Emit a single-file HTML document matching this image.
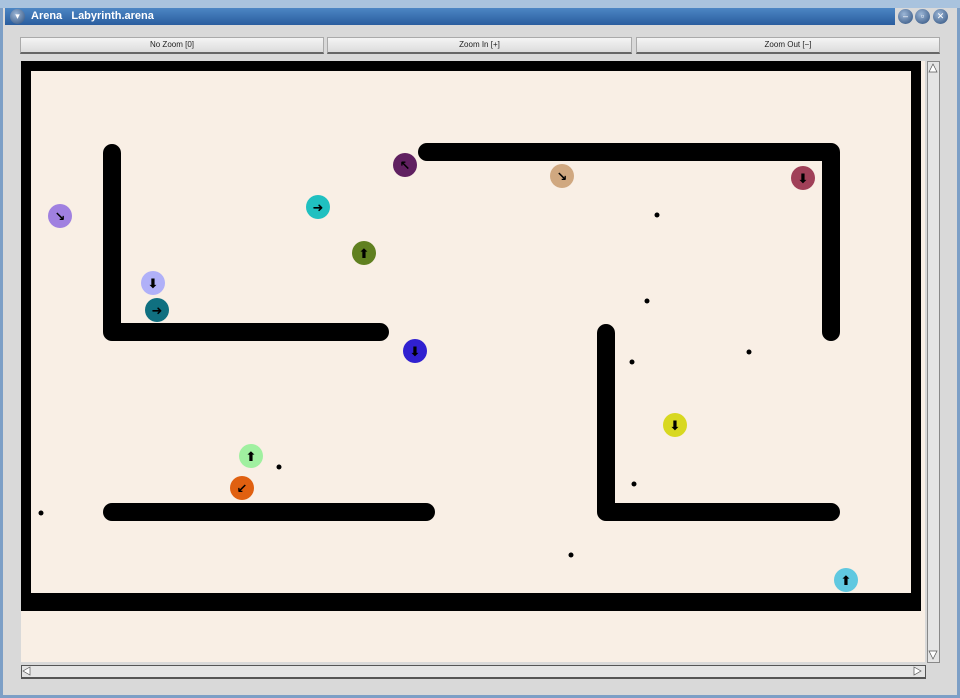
<!DOCTYPE html>
<html><head><style>
body{margin:0;width:960px;height:698px;overflow:hidden;background:#d4d4d4;font-family:"Liberation Sans",sans-serif;position:relative}
.frame{position:absolute;left:0;top:0;width:954px;height:692px;border:3px solid #7d9fc6;background:#d9d9d9}
.title{position:absolute;left:5px;top:8px;width:890px;height:17px;background:linear-gradient(#4c86c4,#2a5d9e);color:#fff;font-weight:bold;font-size:11px;line-height:17px}
.btn{position:absolute;top:37px;height:14px;background:linear-gradient(#f4f4f4,#dcdcdc);border:1px solid #aaa;border-bottom:2px solid #666;font-size:8px;text-align:center;line-height:14px;color:#222}
.wb{position:absolute;top:9px;width:15px;height:15px;border-radius:50%;background:radial-gradient(circle at 40% 35%,#9cb6d6,#2c4e7c);color:#fff;font-size:9px;text-align:center;line-height:15px}
</style></head><body>
<div class="frame"></div>
<div style="position:absolute;left:0;top:0;width:960px;height:8px;background:#a9c3de"></div>
<div class="title"><span style="position:absolute;left:26px">Arena&nbsp;&nbsp;&nbsp;Labyrinth.arena</span></div>
<div class="wb" style="left:10px">▾</div>
<div class="wb" style="left:898px">–</div>
<div class="wb" style="left:915px">▫</div>
<div class="wb" style="left:933px">✕</div>
<div class="btn" style="left:20px;width:302px">No Zoom [0]</div>
<div class="btn" style="left:327px;width:303px">Zoom In [+]</div>
<div class="btn" style="left:636px;width:302px">Zoom Out [−]</div>
<div style="position:absolute;left:21px;top:61px;width:904px;height:601px;background:#f9efe5"></div>
<div style="position:absolute;left:927px;top:61px;width:11px;height:600px;background:#e4e4e4;border:1px solid #888"></div>
<div style="position:absolute;left:21px;top:665px;width:903px;height:11px;background:#e4e4e4;border:1px solid #555;border-bottom:2px solid #555"></div>
<svg style="position:absolute;left:0;top:0" width="960" height="698">
<rect x="26" y="66" width="890" height="536" fill="none" stroke="#000" stroke-width="10"/>
<rect x="21" y="593" width="900" height="18" fill="#000"/>
<g stroke="#000" stroke-width="18" stroke-linecap="round" stroke-linejoin="round" fill="none">
<polyline points="112,153 112,332 380,332"/>
<polyline points="427,152 831,152 831,332"/>
<polyline points="606,333 606,512 831,512"/>
<line x1="112" y1="512" x2="426" y2="512"/>
</g>
<g fill="#000">
<circle cx="657" cy="215" r="2.5"/><circle cx="647" cy="301" r="2.5"/><circle cx="632" cy="362" r="2.5"/><circle cx="749" cy="352" r="2.5"/><circle cx="279" cy="467" r="2.5"/><circle cx="634" cy="484" r="2.5"/><circle cx="41" cy="513" r="2.5"/><circle cx="571" cy="555" r="2.5"/>
</g>
<g font-size="13" font-weight="bold" text-anchor="middle" fill="#000" font-family="DejaVu Sans">
<circle cx="60" cy="216" r="12" fill="#a080e0"/><text x="60" y="221">↘</text>
<circle cx="318" cy="207" r="12" fill="#20c0c0"/><text x="318" y="212">➜</text>
<circle cx="405" cy="165" r="12" fill="#602060"/><text x="405" y="170">↖</text>
<circle cx="562" cy="176" r="12" fill="#d0a880"/><text x="562" y="181">↘</text>
<circle cx="803" cy="178" r="12" fill="#a04058"/><text x="803" y="183">⬇</text>
<circle cx="364" cy="253" r="12" fill="#608020"/><text x="364" y="258">⬆</text>
<circle cx="153" cy="283" r="12" fill="#b0b0f8"/><text x="153" y="288">⬇</text>
<circle cx="157" cy="310" r="12" fill="#107080"/><text x="157" y="315">➜</text>
<circle cx="415" cy="351" r="12" fill="#3020d0"/><text x="415" y="356">⬇</text>
<circle cx="675" cy="425" r="12" fill="#d8d820"/><text x="675" y="430">⬇</text>
<circle cx="251" cy="456" r="12" fill="#a0f0a0"/><text x="251" y="461">⬆</text>
<circle cx="242" cy="488" r="12" fill="#e06010"/><text x="242" y="493">↙</text>
<circle cx="846" cy="580" r="12" fill="#60c8e0"/><text x="846" y="585">⬆</text>
</g>
<polygon points="929,72 933,64 937,72" fill="#fff" stroke="#555" stroke-width="0.7"/>
<polygon points="929,651 933,659 937,651" fill="#fff" stroke="#555" stroke-width="0.7"/>
<polygon points="30,667 23,671 30,675" fill="#fff" stroke="#555" stroke-width="0.7"/>
<polygon points="914,667 921,671 914,675" fill="#fff" stroke="#555" stroke-width="0.7"/>
</svg>
</body></html>
